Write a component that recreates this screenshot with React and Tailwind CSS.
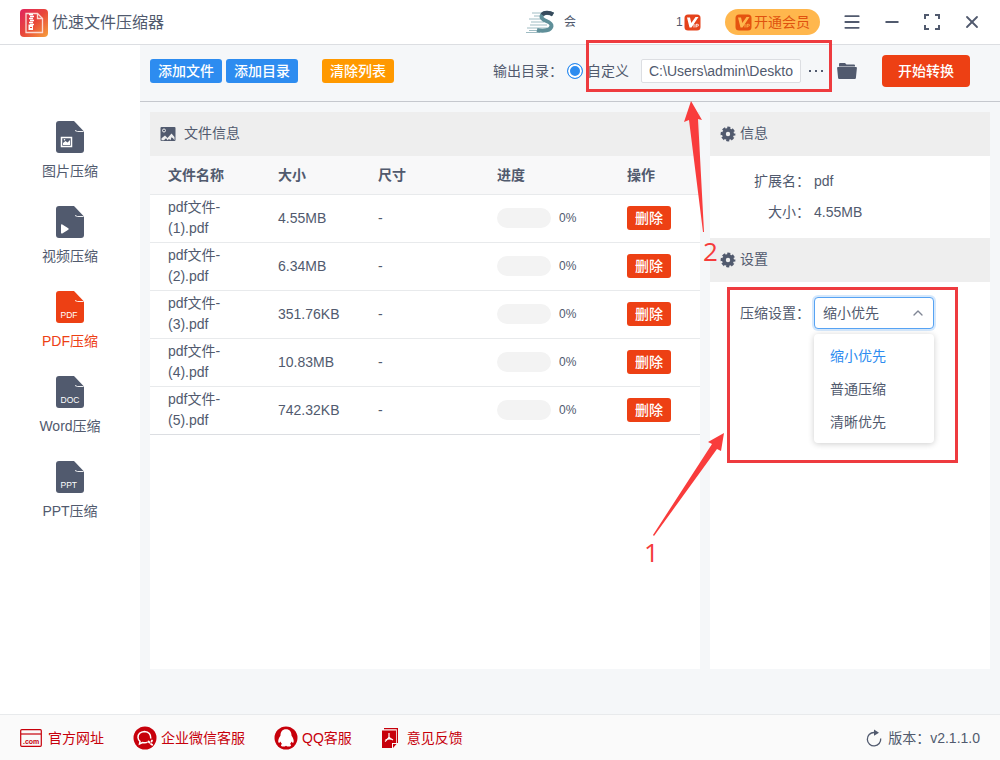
import React, { useState } from 'react';
import { ChevronUp, Menu, Minus, X } from 'lucide-react';

const files = [
  { id: 1, name: 'pdf文件-(1).pdf', size: '4.55MB' },
  { id: 2, name: 'pdf文件-(2).pdf', size: '6.34MB' },
  { id: 3, name: 'pdf文件-(3).pdf', size: '351.76KB' },
  { id: 4, name: 'pdf文件-(4).pdf', size: '10.83MB' },
  { id: 5, name: 'pdf文件-(5).pdf', size: '742.32KB' }
];

const modes = [
  { id: 'image', label: '图片压缩' },
  { id: 'video', label: '视频压缩' },
  { id: 'pdf', label: 'PDF压缩', tag: 'PDF' },
  { id: 'word', label: 'Word压缩', tag: 'DOC' },
  { id: 'ppt', label: 'PPT压缩', tag: 'PPT' }
];

const levels = ['缩小优先', '普通压缩', '清晰优先'];

const LogoIcon = () => (
  <svg viewBox="0 0 28 28" className="w-7 h-7">
    <defs>
      <linearGradient id="logo" x1="0" y1="0" x2="1" y2="1">
        <stop offset="0" stopColor="#e0245e" />
        <stop offset="0.5" stopColor="#e8473a" />
        <stop offset="1" stopColor="#f7a13c" />
      </linearGradient>
    </defs>
    <rect width="28" height="28" rx="4" fill="url(#logo)" />
    <path d="M6 4.5h11.5l5 5V23.500H6z" fill="none" stroke="#fbd9d3" strokeWidth="1.300" />
    <path d="M17.500 4.500v5h5" fill="none" stroke="#fbd9d3" strokeWidth="1.300" />
    <path d="M9 5.500h4M10 7.500h4M9 9.500h4M10 11.500h4M9 13.500h4M10 15.500h4" stroke="#fff" strokeWidth="1.300" />
    <path d="M8.500 15.500h4.500v5.500H8.500z" fill="#fff" />
    <path d="M10 18.500h2" stroke="#e8473a" strokeWidth="1.200" />
  </svg>
);

const AvatarIcon = () => (
  <svg viewBox="0 0 30 24" className="w-[30px] h-6">
    <path d="M6 3h16M8 6h9M3 9h14M5 12h13M4 15h17M1 18h20M3 20.500h20M0 22.500h14" stroke="#9fbcc3" strokeWidth="1" />
    <path d="M27 4.500C23 2 16 2.500 15.500 6.500c-.5 5 10.500 4 10 9.500-.4 4.500-8 5.500-14.500 4" fill="none" stroke="#5f8f99" strokeWidth="4" />
    <path d="M27 4.500C23 2 18 2.300 16.300 4.800" fill="none" stroke="#384b5c" strokeWidth="4" />
  </svg>
);

const VipIcon = ({ fill, mark }) => (
  <svg viewBox="0 0 17 17" className="w-[17px] h-[17px]">
    <rect x="0.500" y="0.500" width="16" height="16" rx="3.500" fill={fill} />
    <path d="M3 3.500h3L7.300 9 11.500 3h3L7.500 13.500H5.500z" fill={mark} />
    <path d="M10 10v3.500M12 13.500V10.300h1.500q1 0 1 .9t-1 .9h-1.500" fill="none" stroke={mark} strokeWidth="0.900" />
  </svg>
);

const FullscreenIcon = () => (
  <svg viewBox="0 0 16 16" className="w-4 h-4" fill="none" stroke="currentColor" strokeWidth="2">
    <path d="M1 5V1h4M11 1h4v4M15 11v4h-4M5 15H1v-4" />
  </svg>
);

const FolderIcon = () => (
  <svg viewBox="0 0 20 18" className="w-5 h-[18px]" fill="currentColor">
    <path d="M2 4.500V2q0-1 1-1h5l1.500 1.500H17q1 0 1 1v1z" />
    <path d="M1 5h18q1 0 .9 1l-1 10q-.1 1-1.100 1H2.200q-1 0-1.100-1L.1 6Q0 5 1 5z" />
  </svg>
);

const FileIcon = ({ mode }) => (
  <svg viewBox="0 0 28 32" className="w-7 h-8">
    <path d="M3 0h15l10 10.500V29q0 3-3 3H3q-3 0-3-3V3q0-3 3-3z" fill="currentColor" />
    <path d="M19 9.500L21.500 10.500H27.500" fill="none" stroke="#fff" strokeWidth="0.900" />
    {mode.id === 'image' && (
      <>
        <rect x="5.500" y="16.500" width="10" height="9" fill="none" stroke="#fff" strokeWidth="1.500" />
        <path d="M7 24v-2l2.500-2 2 1.500 2.500-2.500V24z" fill="#fff" />
        <circle cx="8.500" cy="18.800" r="0.800" fill="#fff" />
      </>
    )}
    {mode.id === 'video' && <path d="M5 19.200q0-1.500 1.300-.8l6 3.900q.8.700 0 1.400l-6 3.700q-1.300.7-1.300-.8z" fill="#fff" />}
    {mode.tag && (
      <text x="4.500" y="27" fill="#fff" fontSize="8.500" fontFamily="Liberation Sans, sans-serif">{mode.tag}</text>
    )}
  </svg>
);

const PictureIcon = () => (
  <svg viewBox="0 0 16 16" className="w-4 h-4">
    <rect x="0.500" y="1" width="15" height="14" rx="1" fill="#515a6e" />
    <circle cx="4" cy="4.500" r="1.500" fill="none" stroke="#eee" />
    <path d="M1.500 14.200v-2L5 9.500l2.500 2.500L11.500 7.500l3 3.500v3.200l-1.500-2-1.500-1-1 3-1.500-1.200-1.500 1.200-1.500-2-2 2z" fill="#eee" />
  </svg>
);

const GearIcon = () => (
  <svg viewBox="0 0 16 16" className="w-4 h-4" fill="none" stroke="#515a6e">
    <circle cx="8" cy="8" r="4.100" strokeWidth="3.800" />
    <circle cx="8" cy="8" r="6.200" strokeWidth="2.400" strokeDasharray="3 1.869" strokeDashoffset="1.500" />
  </svg>
);

const WebsiteIcon = () => (
  <svg viewBox="0 0 22 18" className="w-[22px] h-[18px]">
    <rect x="0.700" y="0.700" width="20.600" height="16.600" rx="1" fill="none" stroke="#c7000b" strokeWidth="1.200" />
    <path d="M1 5h20" stroke="#c7000b" strokeWidth="1.200" />
    <text x="3" y="14.500" fill="#c7000b" fontSize="7" fontWeight="700" fontFamily="Liberation Sans, sans-serif">.com</text>
  </svg>
);

const WechatIcon = () => (
  <svg viewBox="0 0 24 24" className="w-6 h-6" fill="none" stroke="#fff">
    <circle cx="12" cy="12" r="11.500" fill="#c7000b" stroke="none" />
    <path d="M17.800 12.500Q18 6 11.500 5.500 5 6 5 11.500q.2 2.500 2 3.800L6.500 18l3-1.500q3 .8 5-.3" strokeWidth="1.500" />
    <path d="M15.500 15.500l1 1M19 14.500l-.5 1M18 18l1.200.8" strokeWidth="1.800" strokeLinecap="round" />
  </svg>
);

const QqIcon = () => (
  <svg viewBox="0 0 24 24" className="w-6 h-6">
    <circle cx="12" cy="12" r="11.500" fill="#c7000b" />
    <path d="M12 3.200c-3.700 0-5.500 2.500-5.500 6.300-1.500 2.300-3 5.500-1.800 7.300.6.300 1.200-.4 1.700-1.200.3 1 .9 1.800 1.600 2.500-1.300.5-1.500 2 .2 2.400 1.500.3 3 0 3.800-.8.800.8 2.300 1.100 3.800.8 1.700-.4 1.500-1.900.2-2.400.7-.7 1.300-1.500 1.600-2.500.5.800 1.100 1.500 1.700 1.200 1.200-1.800-.3-5-1.800-7.300 0-3.800-1.800-6.300-5.500-6.300z" fill="#fff" />
  </svg>
);

const FeedbackIcon = () => (
  <svg viewBox="0 0 18 22" className="w-[18px] h-[22px]">
    <path d="M3 1.600h13.400V16" fill="none" stroke="#c7000b" strokeWidth="1.200" />
    <path d="M1 3.500h14V16h-4v5H1z" fill="#c7000b" />
    <path d="M12 21v-4h3.500z" fill="#c7000b" />
    <path d="M8 6v4.500M8 10.500L4 14.500M8 10.500l4 2.500M4.500 13q3.500-2 7-.5" fill="none" stroke="#fff" strokeWidth="1.200" />
  </svg>
);

const RefreshIcon = () => (
  <svg viewBox="0 0 16 18" className="w-4 h-[18px]">
    <path d="M8 3.500A6.700 6.700 0 1 0 14.700 9.500" fill="none" stroke="#515a6e" strokeWidth="1.300" />
    <path d="M8 0.500l5 3.200-5 3z" fill="#515a6e" />
  </svg>
);

const PanelTitle = ({ icon, children, wide }) => (
  <h2 className={`flex items-center h-11 px-[10px] bg-[#eeeeee] ${wide ? 'gap-2' : 'gap-1'}`}>
    {icon}
    <span className="pb-[2px]">{children}</span>
  </h2>
);

const TitleBar = () => (
  <header className="flex items-center justify-between h-[45px] pl-5 pr-5 border-b border-[#dcdee2] bg-white">
    <div className="flex items-center gap-1 pt-[2px]">
      <LogoIcon />
      <h1 className="text-base">优速文件压缩器</h1>
    </div>
    <div className="flex items-center">
      <AvatarIcon />
      <span className="ml-2 w-28 text-xs">会</span>
      <span className="w-2 text-xs">1</span>
      <VipIcon fill="#e5431c" mark="#fff" />
      <button className="flex items-center gap-[2px] ml-6 h-[26px] w-[95px] pl-[10px] rounded-full bg-[#ffb74d] text-[#e0520f]">
        <VipIcon fill="#e5530f" mark="#ffb74d" />
        开通会员
      </button>
      <div className="flex items-center gap-5 ml-[22px]">
        <button aria-label="菜单"><Menu className="w-5 h-5" strokeWidth={2.2} /></button>
        <button aria-label="最小化"><Minus className="w-5 h-5" strokeWidth={2.2} /></button>
        <button aria-label="全屏" className="flex w-5 h-5 items-center justify-center"><FullscreenIcon /></button>
        <button aria-label="关闭" className="-mr-[2px]"><X className="w-5 h-5" strokeWidth={2.2} /></button>
      </div>
    </div>
  </header>
);

const Toolbar = () => {
  const [path, setPath] = useState('C:\\Users\\admin\\Deskto');

  return (
    <div className="flex items-center justify-between h-[57px] pl-[10px] pr-[30px] pb-1 border-b border-[#c5c8ce]">
      <div className="flex items-center font-medium text-white">
        <button className="w-[72px] h-6 rounded-[3px] bg-[#2d8cf0]">添加文件</button>
        <button className="ml-1 w-[72px] h-6 rounded-[3px] bg-[#2d8cf0]">添加目录</button>
        <button className="ml-6 w-[72px] h-6 rounded-[3px] bg-[#ff9900]">清除列表</button>
      </div>
      <div className="flex items-center">
        <span className="w-[74px]">输出目录：</span>
        <label className="flex items-center gap-1 w-[74px]">
          <input
            type="radio"
            name="output"
            defaultChecked
            className="appearance-none w-4 h-4 shrink-0 rounded-full border border-[#2d8cf0] bg-[#2d8cf0] shadow-[inset_0_0_0_2px_#fff]"
          />
          自定义
        </label>
        <input
          type="text"
          aria-label="输出路径"
          value={path}
          onChange={(e) => setPath(e.target.value)}
          className="w-40 h-6 px-[7px] rounded-[2px] border border-[#dcdee2] bg-white"
        />
        <button aria-label="更多" className="flex gap-1 px-2">
          <i className="w-[2px] h-[2px] bg-[#515a6e]" />
          <i className="w-[2px] h-[2px] bg-[#515a6e]" />
          <i className="w-[2px] h-[2px] bg-[#515a6e]" />
        </button>
        <button aria-label="打开文件夹" className="ml-[6px]"><FolderIcon /></button>
        <button className="ml-[25px] w-[88px] h-8 rounded bg-[#ed4014] font-medium text-white">开始转换</button>
      </div>
    </div>
  );
};

const FileTable = () => (
  <section className="flex-1 bg-white">
    <PanelTitle icon={<PictureIcon />} wide>文件信息</PanelTitle>
    <table className="w-full table-fixed border-collapse text-left">
      <thead>
        <tr className="h-[38px] border-b border-[#e8eaec] bg-[#f8f8f9]">
          <th className="w-[110px] pl-[18px] font-bold">文件名称</th>
          <th className="w-[100px] pl-[18px] font-bold">大小</th>
          <th className="w-[119px] pl-[18px] font-bold">尺寸</th>
          <th className="pl-[18px] font-bold">进度</th>
          <th className="w-[91px] pl-[18px] font-bold">操作</th>
        </tr>
      </thead>
      <tbody>
        {files.map((f) => (
          <tr key={f.id} className="h-12 border-b border-[#e8eaec] last:border-[#dcdee2]">
            <td className="px-[18px] leading-[21px]">{f.name}</td>
            <td className="pl-[18px]">{f.size}</td>
            <td className="pl-[18px]">-</td>
            <td className="pl-[18px]">
              <div className="flex items-center gap-2">
                <div className="w-[54px] h-5 rounded-full bg-[#f3f3f3]" />
                <span className="text-xs">0%</span>
              </div>
            </td>
            <td className="pl-[18px]">
              <button className="w-11 h-6 rounded-[3px] bg-[#ed4014] font-medium text-white">删除</button>
            </td>
          </tr>
        ))}
      </tbody>
    </table>
  </section>
);

const SettingsPanel = () => {
  const [level, setLevel] = useState(levels[0]);

  return (
    <aside className="w-[280px] shrink-0 bg-white">
      <PanelTitle icon={<GearIcon />}>信息</PanelTitle>
      <dl className="grid grid-cols-[100px_1fr] gap-x-1 py-[10px] leading-[31px]">
        <dt className="text-right">扩展名：</dt>
        <dd>pdf</dd>
        <dt className="text-right">大小：</dt>
        <dd>4.55MB</dd>
      </dl>
      <PanelTitle icon={<GearIcon />}>设置</PanelTitle>
      <div className="flex items-center gap-1 pt-[15px] pl-[30px]">
        <label htmlFor="level" className="w-[70px]">压缩设置：</label>
        <div className="relative w-[120px]">
          <select
            id="level"
            value={level}
            onChange={(e) => setLevel(e.target.value)}
            className="appearance-none w-full h-8 px-2 rounded border border-[#57a3f3] bg-white shadow-[0_0_0_2px_rgba(45,140,240,0.2)] outline-none"
          >
            {levels.map((l) => (
              <option key={l}>{l}</option>
            ))}
          </select>
          <ChevronUp className="absolute right-2 top-2 w-4 h-4 text-[#808695] pointer-events-none" strokeWidth={2} />
          <ul className="absolute top-full left-0 mt-[5px] w-full py-[5px] rounded bg-white shadow-[0_1px_6px_rgba(0,0,0,0.2)]">
            {levels.map((l) => (
              <li key={l}>
                <button
                  onClick={() => setLevel(l)}
                  className={`w-full h-[33px] px-4 text-left ${l === level ? 'text-[#2d8cf0]' : ''}`}
                >
                  {l}
                </button>
              </li>
            ))}
          </ul>
        </div>
      </div>
    </aside>
  );
};

const Footer = () => (
  <footer className="flex items-center justify-between h-[46px] px-5 border-t border-[#e8eaec] bg-[#fafafa]">
    <nav className="flex items-center gap-[29px] text-[#c7000b]">
      <a href="#site" className="flex items-center gap-[6px]"><WebsiteIcon />官方网址</a>
      <a href="#wechat" className="flex items-center gap-1"><WechatIcon />企业微信客服</a>
      <a href="#qq" className="flex items-center gap-1"><QqIcon />QQ客服</a>
      <a href="#feedback" className="flex items-center gap-2"><FeedbackIcon />意见反馈</a>
    </nav>
    <div className="flex items-center gap-[6px]">
      <RefreshIcon />
      版本：v2.1.1.0
    </div>
  </footer>
);

// Numbered step marks, anchored to the right edge like the controls they point at
const StepMarks = () => (
  <div className="absolute top-0 right-0 w-[420px] h-[600px] text-[26px] leading-none text-[#f53b3b] pointer-events-none">
    <div className="absolute left-[6px] top-10 w-[246px] h-[52px] border-3 border-[#ee3b3f]" />
    <div className="absolute left-[147px] top-[287px] w-[231px] h-[176px] border-3 border-[#ee3b3f]" />
    <svg viewBox="0 0 420 600" className="absolute inset-0 w-full h-full" fill="#f93c3c">
      <path d="M111 101l11 19-4-1 6 113h-1L109 120l-5 2z" />
      <path d="M144 433l-3 18-4-2-63 87-1-1 59-91-4-2z" />
    </svg>
    <span className="absolute left-[123px] top-[238px] font-['Open_Sans',sans-serif]">2</span>
    <span className="absolute left-[64px] top-[539px] font-['Open_Sans',sans-serif]">1</span>
  </div>
);

export default function App() {
  const [mode, setMode] = useState('pdf');

  return (
    <div className="relative flex flex-col min-h-screen bg-[#f5f7f9] font-['Liberation_Sans','Noto_Sans_CJK_SC',sans-serif] text-sm text-[#515a6e]">
      <TitleBar />
      <div className="flex flex-1">
        <nav className="flex flex-col items-center gap-[25px] w-[140px] shrink-0 pt-[76px] bg-white">
          {modes.map((m) => (
            <button
              key={m.id}
              onClick={() => setMode(m.id)}
              className={`flex flex-col items-center gap-2 ${m.id === mode ? 'text-[#ed4014]' : ''}`}
            >
              <FileIcon mode={m} />
              <span className="leading-5">{m.label}</span>
            </button>
          ))}
        </nav>
        <main className="flex flex-col flex-1 min-w-0">
          <Toolbar />
          <div className="flex flex-1 gap-[10px] px-[10px] pt-[10px] pb-[45px]">
            <FileTable />
            <SettingsPanel />
          </div>
        </main>
      </div>
      <Footer />
      <StepMarks />
    </div>
  );
}
